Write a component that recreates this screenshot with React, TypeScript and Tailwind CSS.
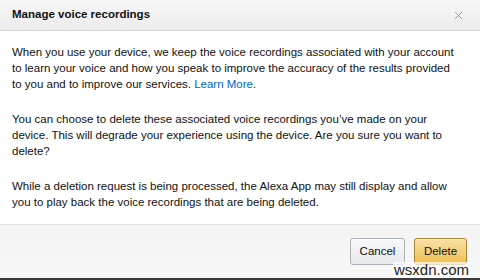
import { X } from "lucide-react";

export default function App() {
  return (
    <div className="relative flex h-[280px] w-[480px] flex-col overflow-hidden bg-white font-['Liberation_Sans',Arial,sans-serif] text-[11.5px] text-[#111]">
      <div className="flex h-[31px] shrink-0 items-center justify-between border-b border-[#d6d6d6] bg-gradient-to-b from-[#f7f7f7] to-[#ececec] pl-3 pr-[15px]">
        <h1 className="text-[11.5px] font-bold leading-none text-[#111]">
          Manage voice recordings
        </h1>
        <X className="h-[13px] w-[13px] text-[#8c8c8c]" strokeWidth={1.5} />
      </div>

      {/* line breaks follow the reference */}
      <div className="flex shrink-0 flex-col gap-[19px] whitespace-nowrap px-3 pb-[14px] pt-[13px] leading-[16px]">
        <p>
          When you use your device, we keep the voice recordings associated with your account
          <br />
          to learn your voice and how you speak to improve the accuracy of the results provided
          <br />
          to you and to improve our services. <a className="text-[#0066c0]">Learn More</a>.
        </p>
        <p>
          You can choose to delete these associated voice recordings you’ve made on your
          <br />
          device. This will degrade your experience using the device. Are you sure you want to
          <br />
          delete?
        </p>
        <p>
          While a deletion request is being processed, the Alexa App may still display and allow
          <br />
          you to play back the voice recordings that are being deleted.
        </p>
      </div>

      <div className="flex flex-1 items-center justify-end gap-[9px] border-t border-[#e2e2e2] bg-gradient-to-b from-[#f3f3f3] to-[#f8f8f8] pr-[13px]">
        <button className="h-[27px] w-[55px] rounded-[3px] border border-[#adb1b8] bg-gradient-to-b from-[#f7f8fa] to-[#e7e9ec] text-[11.5px] text-[#111] shadow-[inset_0_1px_0_rgba(255,255,255,0.6)]">
          Cancel
        </button>
        <button className="h-[27px] w-[53px] rounded-[3px] border border-[#a88734] bg-gradient-to-b from-[#f7dfa5] to-[#f0c14b] text-[11.5px] text-[#111] shadow-[inset_0_1px_0_rgba(255,255,255,0.4)]">
          Delete
        </button>
      </div>

      <div className="h-[2px] shrink-0 bg-[#3a3a3a]" />

      <span className="absolute bottom-[2px] right-[10px] bg-white/70 px-[1px] text-[15px] leading-[16px] text-[#222]">
        wsxdn.com
      </span>
    </div>
  );
}
